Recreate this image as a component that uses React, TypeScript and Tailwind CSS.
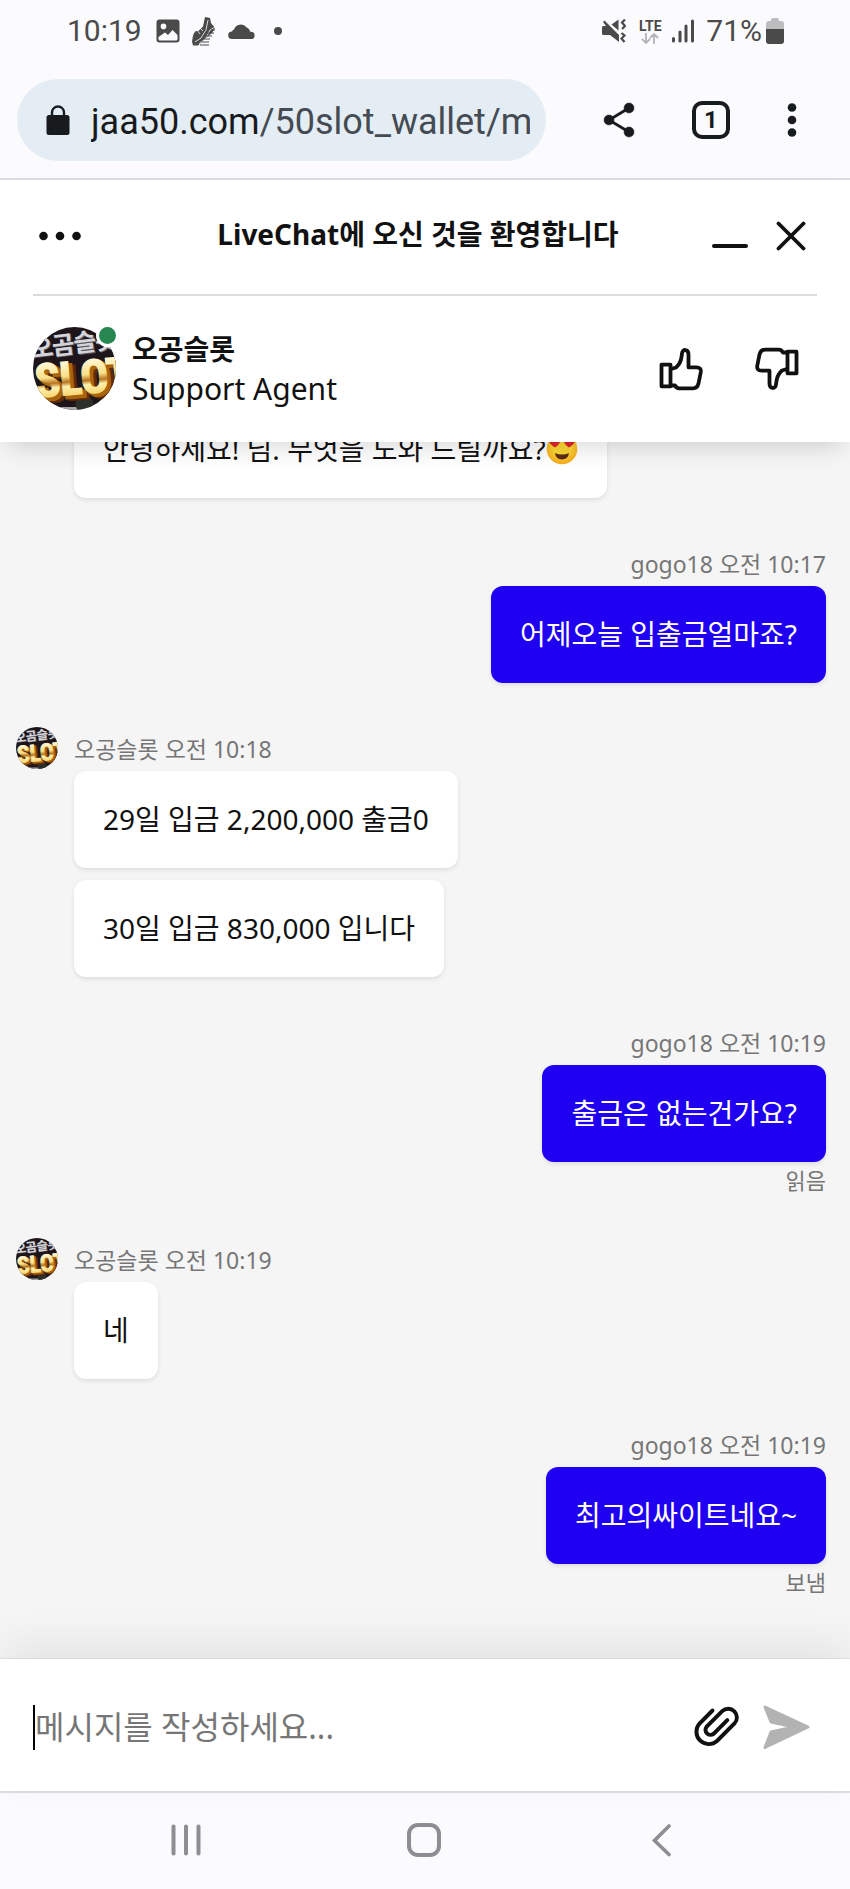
import React from "react";

const body = "font-['Noto_Sans','Noto_Sans_CJK_KR',sans-serif]";

function Avatar({ className, id }: { className: string; id: string }) {
  return (
    <svg viewBox="0 0 84 84" className={className} role="img" aria-label="오공슬롯">
      <defs>
        <clipPath id={`${id}-clip`}>
          <circle cx="42" cy="42" r="42" />
        </clipPath>
        <linearGradient id={`${id}-gold`} x1="0" y1="0" x2="0" y2="1">
          <stop offset="0.2" stopColor="#fff6cf" />
          <stop offset="0.45" stopColor="#fbe08a" />
          <stop offset="0.56" stopColor="#b87420" />
          <stop offset="0.64" stopColor="#fff0b0" />
          <stop offset="0.85" stopColor="#f6cf62" />
        </linearGradient>
      </defs>
      <g clipPath={`url(#${id}-clip)`}>
        <rect width="84" height="84" fill="#1d151a" />
        <rect y="81" width="84" height="3" fill="#aaa" />
        <circle cx="52" cy="78" r="9" fill="#2c2f2a" />
        <g transform="rotate(-7 42 42)" fontFamily="'Noto Sans CJK KR', sans-serif" fontWeight="700" fontSize="25">
          <text x="1 23 45 67" y="27" fill="#5d5d64">오곰슬롯</text>
          <text x="0 22 44 66" y="26" fill="#d4d4d9">오곰슬롯</text>
        </g>
        <g
          transform="rotate(-5 42 42)"
          fontFamily="'Liberation Sans Narrow', 'Roboto Condensed', 'DejaVu Sans Condensed', sans-serif"
          fontWeight="700"
          fontSize="47"
        >
          <text x="7 32 53 79" y="73" fill="#5f2c06" stroke="#5f2c06" strokeWidth="3">SLOT</text>
          <text x="4 29 50 76" y="71" fill="#a8650f" stroke="#a8650f" strokeWidth="3">SLOT</text>
          <text x="1 26 47 73" y="68" fill={`url(#${id}-gold)`} stroke={`url(#${id}-gold)`} strokeWidth="1.500">SLOT</text>
        </g>
      </g>
    </svg>
  );
}

function StatusBar() {
  return (
    <div className="flex h-[62px] shrink-0 items-center justify-between pl-[67px] pr-[66px] font-['Roboto',sans-serif] text-[30px] leading-9 text-[#4a4a4a]">
      <div className="flex items-center">
        <span>10:19</span>
        <svg viewBox="0 0 24 24" className="ml-[14px] size-6">
          <path
            fill="currentColor"
            fillRule="evenodd"
            d="M3.5 0.5h17a3 3 0 0 1 3 3v17a3 3 0 0 1-3 3h-17a3 3 0 0 1-3-3v-17a3 3 0 0 1 3-3zM2.500 18v2q0 1.500 1.500 1.500h16q1.500 0 1.500-1.500v-4l-5-5-4.500 5-3-2.500zM7.500 4.600a2.800 2.800 0 1 0 0 5.600a2.800 2.800 0 1 0 0-5.600z"
          />
        </svg>
        <svg viewBox="0 0 24 30" className="ml-3 h-[30px] w-6">
          <path fill="currentColor" d="M13 1l5 1 1 5 4 5-3 5-6 5-5 5-3 2.500-5 0-1-4 1-6 2-4 4-1 4-4z" />
          <path
            d="M3 26l6-4 5-8 2-10M7 28l7-6 4-8 5-3M5 14l3 4M8 12l3 3"
            stroke="#fbfbfe"
            strokeWidth="0.8"
            fill="none"
          />
          <path d="M15 17h7M13 20h7M11 23h7M10 26h7M8 29h9M19 14h4" stroke="currentColor" strokeWidth="1.100" fill="none" />
        </svg>
        <svg viewBox="0 0 27 15" className="ml-3 h-[15px] w-[27px]">
          <path fill="currentColor" d="M4 15a3.800 3.800 0 0 1 0-7.600A4 4 0 0 1 6 5.500 7.300 7.300 0 0 1 18.500 3.200q3 1 3.800 4.600H23a3.600 3.600 0 0 1 0 7.200z" />
        </svg>
        <span className="ml-[19px] size-2 rounded-full bg-current" />
      </div>
      <div className="flex items-center">
        <svg viewBox="0 0 24 24" className="size-6" fill="none" stroke="currentColor">
          <path fill="currentColor" stroke="none" d="M0 8l1-1h3L1 3l1.500-1.500L17 16v7L8 16H1.500Q0 16 0 14.500zM9.500 5.500L16.500.500v11z" />
          <path strokeWidth="2.200" d="M23 .500l-3 3 3 3.500-3 3M19.500 14l3 2.500-3 3 3 3.500" />
        </svg>
        <div className="ml-[11px] flex w-[26px] flex-col items-center">
          <span className="text-[14px] font-bold leading-[14px]">LTE</span>
          <svg viewBox="0 0 18 11" className="h-[11px] w-[18px] text-[#b4b4b6]" fill="none" stroke="currentColor" strokeWidth="1.8">
            <path d="M5 0v10M1 6l4 4 4-4M13 11V1M9 5l4-4 4 4" />
          </svg>
        </div>
        <svg viewBox="0 0 22 24" className="ml-[9px] h-6 w-[22px]" stroke="currentColor" strokeWidth="3" strokeLinecap="round">
          <path d="M1.500 19.500v2.500M8 13v9M14 7v15M20.500 2v20" />
        </svg>
        <span className="ml-3">71%</span>
        <svg viewBox="0 0 18 26" className="ml-1 h-[26px] w-[18px]">
          <path fill="#bdbdbf" d="M5 3V2q0-2 2-2h4q2 0 2 2v1h2q3 0 3 3v6H0V6q0-3 3-3z" />
          <path fill="currentColor" d="M0 11h18v12q0 3-3 3H3q-3 0-3-3z" />
        </svg>
      </div>
    </div>
  );
}

function BrowserBar() {
  return (
    <div className="flex shrink-0 items-center gap-[57px] border-b-2 border-[#dadee4] pb-[17px] pl-[17px] pr-[53px] pt-[17px] text-[#181b1e]">
      <div className="flex h-[82px] min-w-0 flex-1 items-center rounded-full bg-[#e5edf4] pl-[29px] pr-4">
        <svg viewBox="0 0 24 30" className="h-[30px] w-6 shrink-0">
          <rect x="0.500" y="10" width="23" height="20" rx="2.500" fill="currentColor" />
          <path d="M6 11V7.500a6 6 0 0 1 12 0V11" fill="none" stroke="currentColor" strokeWidth="2.400" />
        </svg>
        <span className="ml-[21px] min-w-0 flex-1 overflow-hidden whitespace-nowrap pt-1 font-['Roboto',sans-serif] text-[36px] leading-[48px]">
          jaa50.com<span className="text-[#444b53]">/50slot_wallet/m</span>
        </span>
      </div>
      <button aria-label="공유" className="shrink-0">
        <svg viewBox="0 0 32 36" className="h-9 w-8" fill="currentColor" stroke="currentColor">
          <path d="M26 6L6 18l20 12" fill="none" strokeWidth="2.800" />
          <circle cx="26" cy="6" r="5" strokeWidth="0.500" />
          <circle cx="6" cy="18" r="5" strokeWidth="0.500" />
          <circle cx="26" cy="30" r="5" strokeWidth="0.500" />
        </svg>
      </button>
      <button
        aria-label="탭 1개"
        className="flex size-[38px] shrink-0 items-center justify-center rounded-[10px] border-4 border-current font-['Roboto',sans-serif] text-[24px] font-bold leading-6"
      >
        1
      </button>
      <button aria-label="메뉴" className="shrink-0">
        <svg viewBox="0 0 10 36" className="h-9 w-[10px]" fill="currentColor">
          <circle cx="5" cy="5.500" r="4.300" />
          <circle cx="5" cy="18" r="4.300" />
          <circle cx="5" cy="30.500" r="4.300" />
        </svg>
      </button>
    </div>
  );
}

function Thumb() {
  return (
    <svg viewBox="0 0 44 44" className="size-11" fill="none" stroke="currentColor" strokeWidth="3.800" strokeLinejoin="round">
      <path d="M2.500 17.700h9v21.600h-9z" />
      <path d="M12 22l5-1.500C21 17 22 14 22.500 10L23 6.500C23.300 1.700 29.500 1.700 29.500 7.500V20.300h8q4.800 0 4.300 4.700L39.500 36.500Q38.300 41.300 34 41.300H20Q17.500 41.300 16 38.500H12" />
    </svg>
  );
}

function ChatHeader() {
  return (
    <header className="relative z-10 shrink-0 bg-white px-[33px] text-[#111] shadow-[0_12px_24px_-8px_rgba(0,0,0,0.16)]">
      <div className="flex h-[116px] items-center border-b-2 border-[#dcdcdc] pb-[3px]">
        <div className="flex w-[91px] shrink-0">
          <button aria-label="더보기" className="pl-[6px]">
            <svg viewBox="0 0 42 10" className="h-[10px] w-[42px]" fill="currentColor">
              <circle cx="4.500" cy="5" r="4.300" />
              <circle cx="21" cy="5" r="4.300" />
              <circle cx="37.500" cy="5" r="4.300" />
            </svg>
          </button>
        </div>
        <h1 className="min-w-0 flex-1 pb-1 text-center text-[28px] font-bold leading-10">LiveChat에 오신 것을 환영합니다</h1>
        <button aria-label="최소화">
          <svg viewBox="0 0 36 30" className="h-[30px] w-9" stroke="currentColor" strokeWidth="4" strokeLinecap="round">
            <path d="M2 25h32" />
          </svg>
        </button>
        <button aria-label="닫기" className="ml-7 pr-[11px]">
          <svg viewBox="0 0 30 30" className="size-[30px]" stroke="currentColor" strokeWidth="3.800" strokeLinecap="round">
            <path d="M2.500 2.500l25 25M27.500 2.500l-25 25" />
          </svg>
        </button>
      </div>
      <div className="flex items-center pb-8 pt-[31px]">
        <div className="relative">
          <Avatar id="agent" className="size-[83px]" />
          <span className="absolute -right-[3px] -top-[3px] size-[23px] rounded-full border-[3px] border-white bg-[#268750]" />
        </div>
        <div className="ml-4 flex-1">
          <p className="text-[28px] font-bold leading-10">오공슬롯</p>
          <p className="text-[30px] leading-10">Support Agent</p>
        </div>
        <div className="flex gap-[52px] pr-[18px]">
          <button aria-label="좋아요">
            <Thumb />
          </button>
          <button aria-label="싫어요" className="rotate-180">
            <Thumb />
          </button>
        </div>
      </div>
    </header>
  );
}

function HeartEyes() {
  return (
    <svg viewBox="0 0 32 32" className="-mt-2 inline-block size-8 align-middle" role="img" aria-label="😍">
      <defs>
        <radialGradient id="face" cx="0.5" cy="0.4" r="0.6">
          <stop offset="0.5" stopColor="#fdd835" />
          <stop offset="1" stopColor="#f5a81c" />
        </radialGradient>
      </defs>
      <circle cx="16" cy="16" r="15.300" fill="url(#face)" />
      <path d="M9 14.500C5 12 2.500 9.500 3.500 6.500 4.500 4 8 4 9 6.500c2-2 5-1 5 1.500 0 2.500-2 4.500-5 6.500z" fill="#e1262d" />
      <path d="M23 14.500c4-2.500 6.500-5 5.500-8-1-2.500-4.500-2.500-5.500 0-2-2-5-1-5 1.500 0 2.500 2 4.500 5 6.500z" fill="#e1262d" />
      <path d="M9 20q7 3 14 0-1 6.500-7 6.500t-7-6.500z" fill="#5d2c18" />
    </svg>
  );
}

const bubbleBase = "rounded-xl px-[29px] py-7 text-[28px] leading-[41px] shadow-[0_2px_4px_rgba(0,0,0,0.1)]";

function AgentGroup({ id, time, messages }: { id: string; time?: string; messages: React.ReactNode[] }) {
  return (
    <section className="flex flex-col items-start pl-[58px]">
      {time && (
        <div className="-ml-[58px] flex h-11 items-end gap-4">
          <Avatar id={id} className="size-[42px] self-start" />
          <p className="pb-[6px] text-[23px] leading-8 text-[#767676]">오공슬롯 {time}</p>
        </div>
      )}
      <div className="flex flex-col items-start gap-3">
        {messages.map((m, i) => (
          <div key={i} className={`${bubbleBase} bg-white text-[#111]`}>
            {m}
          </div>
        ))}
      </div>
    </section>
  );
}

function UserGroup({ time, text, status }: { time: string; text: string; status?: string }) {
  return (
    <section className="flex flex-col items-end">
      <div className="flex h-11 items-end">
        <p className="pb-[6px] text-[23px] leading-8 text-[#767676]">gogo18 {time}</p>
      </div>
      <div className={`${bubbleBase} bg-[#2000f0] text-white`}>{text}</div>
      {status && <p className="pt-1 text-[22px] leading-7 text-[#767676]">{status}</p>}
    </section>
  );
}

export default function App() {
  return (
    <div className={`${body} flex h-screen flex-col overflow-hidden bg-[#fbfbfe]`}>
      <StatusBar />
      <BrowserBar />
      <ChatHeader />
      <main className="flex min-h-0 flex-1 flex-col justify-end gap-11 overflow-hidden bg-[#f5f5f5] pb-[63px] pl-4 pr-6">
        <AgentGroup id="a0" messages={[<span className="block h-[41px]">안녕하세요! 님. 무엇을 도와 드릴까요?<HeartEyes /></span>]} />
        <UserGroup time="오전 10:17" text="어제오늘 입출금얼마죠?" />
        <AgentGroup id="a1" time="오전 10:18" messages={["29일 입금 2,200,000 출금0", "30일 입금 830,000 입니다"]} />
        <UserGroup time="오전 10:19" text="출금은 없는건가요?" status="읽음" />
        <AgentGroup id="a2" time="오전 10:19" messages={["네"]} />
        <UserGroup time="오전 10:19" text="최고의싸이트네요~" status="보냄" />
      </main>
      <form
        className="relative flex h-[132px] shrink-0 items-center bg-white pl-[33px] pr-10 pt-1 shadow-[0_-16px_40px_rgba(0,0,0,0.07),0_-1px_1px_rgba(0,0,0,0.05)]"
        onSubmit={(e) => e.preventDefault()}
      >
        <span className="h-[45px] w-[2px] shrink-0 bg-black" />
        <input
          aria-label="메시지"
          placeholder="메시지를 작성하세요..."
          className="h-12 min-w-0 flex-1 bg-transparent text-[32px] leading-[48px] text-[#111] outline-none placeholder:text-[#767676]"
        />
        <button type="button" aria-label="파일 첨부" className="text-[#111]">
          <svg viewBox="0 0 48 48" className="size-12" fill="none" stroke="currentColor" strokeWidth="3.900" strokeLinecap="round">
            <path d="M20.500 7.500L7.500 20.500A12.400 12.400 0 0 0 25 38L42.500 20.500A8.700 8.700 0 0 0 30.200 8.200L14.500 23.900A5 5 0 0 0 21.500 30.900L35.300 17.100" />
          </svg>
        </button>
        <button type="submit" aria-label="보내기" className="ml-[22px] text-[#b3b3b3]">
          <svg viewBox="0 0 48 48" className="size-12" fill="currentColor" stroke="currentColor" strokeWidth="3" strokeLinejoin="round">
            <path d="M3 4L46 24 3 44.500 9 29 32 24 9 19z" />
          </svg>
        </button>
      </form>
      <nav className="grid h-[98px] shrink-0 grid-cols-3 items-center justify-items-center border-t-2 border-[#dbdfe4] bg-[#fbfbfe] pb-[2px] pl-[67px] pr-[69px] text-[#8e8e90]">
        <button aria-label="최근 앱">
          <svg viewBox="0 0 34 34" className="size-[34px]" stroke="currentColor" strokeWidth="4" strokeLinecap="round">
            <path d="M4.500 3.500v27M17 3.500v27M29.500 3.500v27" />
          </svg>
        </button>
        <button aria-label="홈">
          <svg viewBox="0 0 34 34" className="size-[34px]" fill="none" stroke="currentColor" strokeWidth="4">
            <rect x="2" y="2" width="30" height="30" rx="9" />
          </svg>
        </button>
        <button aria-label="뒤로">
          <svg viewBox="0 0 34 34" className="size-[34px]" fill="none" stroke="currentColor" strokeWidth="3.600" strokeLinecap="round" strokeLinejoin="miter">
            <path d="M24 3L9.500 17.500l14.500 14" />
          </svg>
        </button>
      </nav>
    </div>
  );
}
